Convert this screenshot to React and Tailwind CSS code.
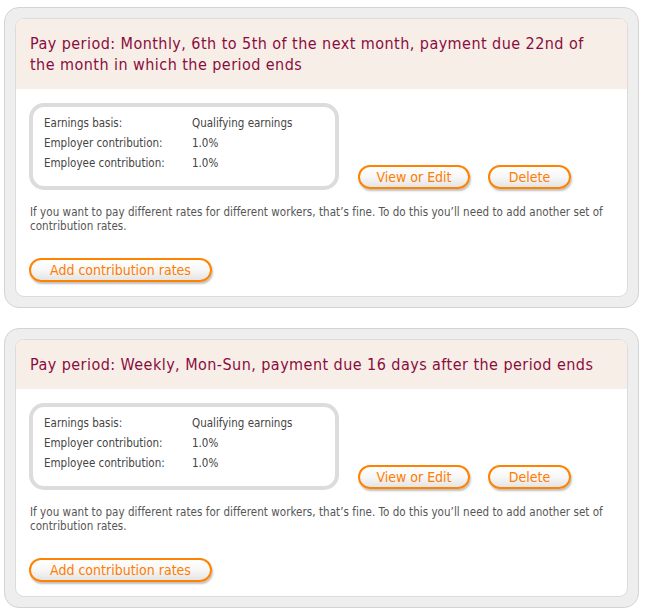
import React from 'react'

const periods = [
  { title: 'Pay period: Monthly, 6th to 5th of the next month, payment due 22nd of the month in which the period ends' },
  { title: 'Pay period: Weekly, Mon-Sun, payment due 16 days after the period ends' },
]

const rows = [
  ['Earnings basis:', 'Qualifying earnings'],
  ['Employer contribution:', '1.0%'],
  ['Employee contribution:', '1.0%'],
]

function OrangeButton({ children, className = '' }) {
  return (
    <button
      className={
        'h-[24px] rounded-full border-2 border-[#ff8200] bg-gradient-to-b from-white via-[#f7f7f7] to-[#e4e4e4] text-[14px] leading-none text-[#ff7c00] shadow-[1px_2px_2px_rgba(0,0,0,0.25)] ' +
        className
      }
    >
      {children}
    </button>
  )
}

function PeriodCard({ title }) {
  return (
    <div className="rounded-[15px] border border-[#d3d3d3] bg-[#eeeeee] p-[10px]">
      <div className="overflow-hidden rounded-[9px] border border-[#dcdcdc] bg-white">
        {/* Header */}
        <div className="bg-[#f8eee8] px-[14px] py-[14px] text-[16px] leading-[21px] tracking-[0.45px] text-[#8a0c3c]">
          {title}
        </div>

        {/* Body */}
        <div className="px-[13px] pt-[14px] pb-[14px]">
          <div className="flex items-end">
            <div className="w-[310px] rounded-[15px] border-4 border-[#dcdcdc] pt-[7px] pb-[12px] pl-[11px]">
              {rows.map(([label, value]) => (
                <div key={label} className="flex h-[20px] items-center text-[11.5px] text-[#444]">
                  <span className="w-[148px]">{label}</span>
                  <span>{value}</span>
                </div>
              ))}
            </div>
            <div className="mb-[1px] ml-[19px] flex gap-[18px]">
              <OrangeButton className="w-[112px]">View or Edit</OrangeButton>
              <OrangeButton className="w-[83px]">Delete</OrangeButton>
            </div>
          </div>

          <p className="mt-[15px] pl-[1px] text-[11.5px] leading-[14px] tracking-[0.05px] text-[#555]">
            If you want to pay different rates for different workers, that’s fine. To do this you’ll need to add another set of contribution rates.
          </p>

          <OrangeButton className="mt-[25px] w-[183px]">Add contribution rates</OrangeButton>
        </div>
      </div>
    </div>
  )
}

export default function App() {
  return (
    <div
      className="min-h-[611px] w-[645px] bg-white pt-[7px] pl-[4px] pr-[6px]"
      style={{ fontFamily: '"DejaVu Sans Condensed", "DejaVu Sans", Tahoma, sans-serif' }}
    >
      <div className="flex flex-col gap-[20px]">
        {periods.map((p) => (
          <PeriodCard key={p.title} title={p.title} />
        ))}
      </div>
    </div>
  )
}
